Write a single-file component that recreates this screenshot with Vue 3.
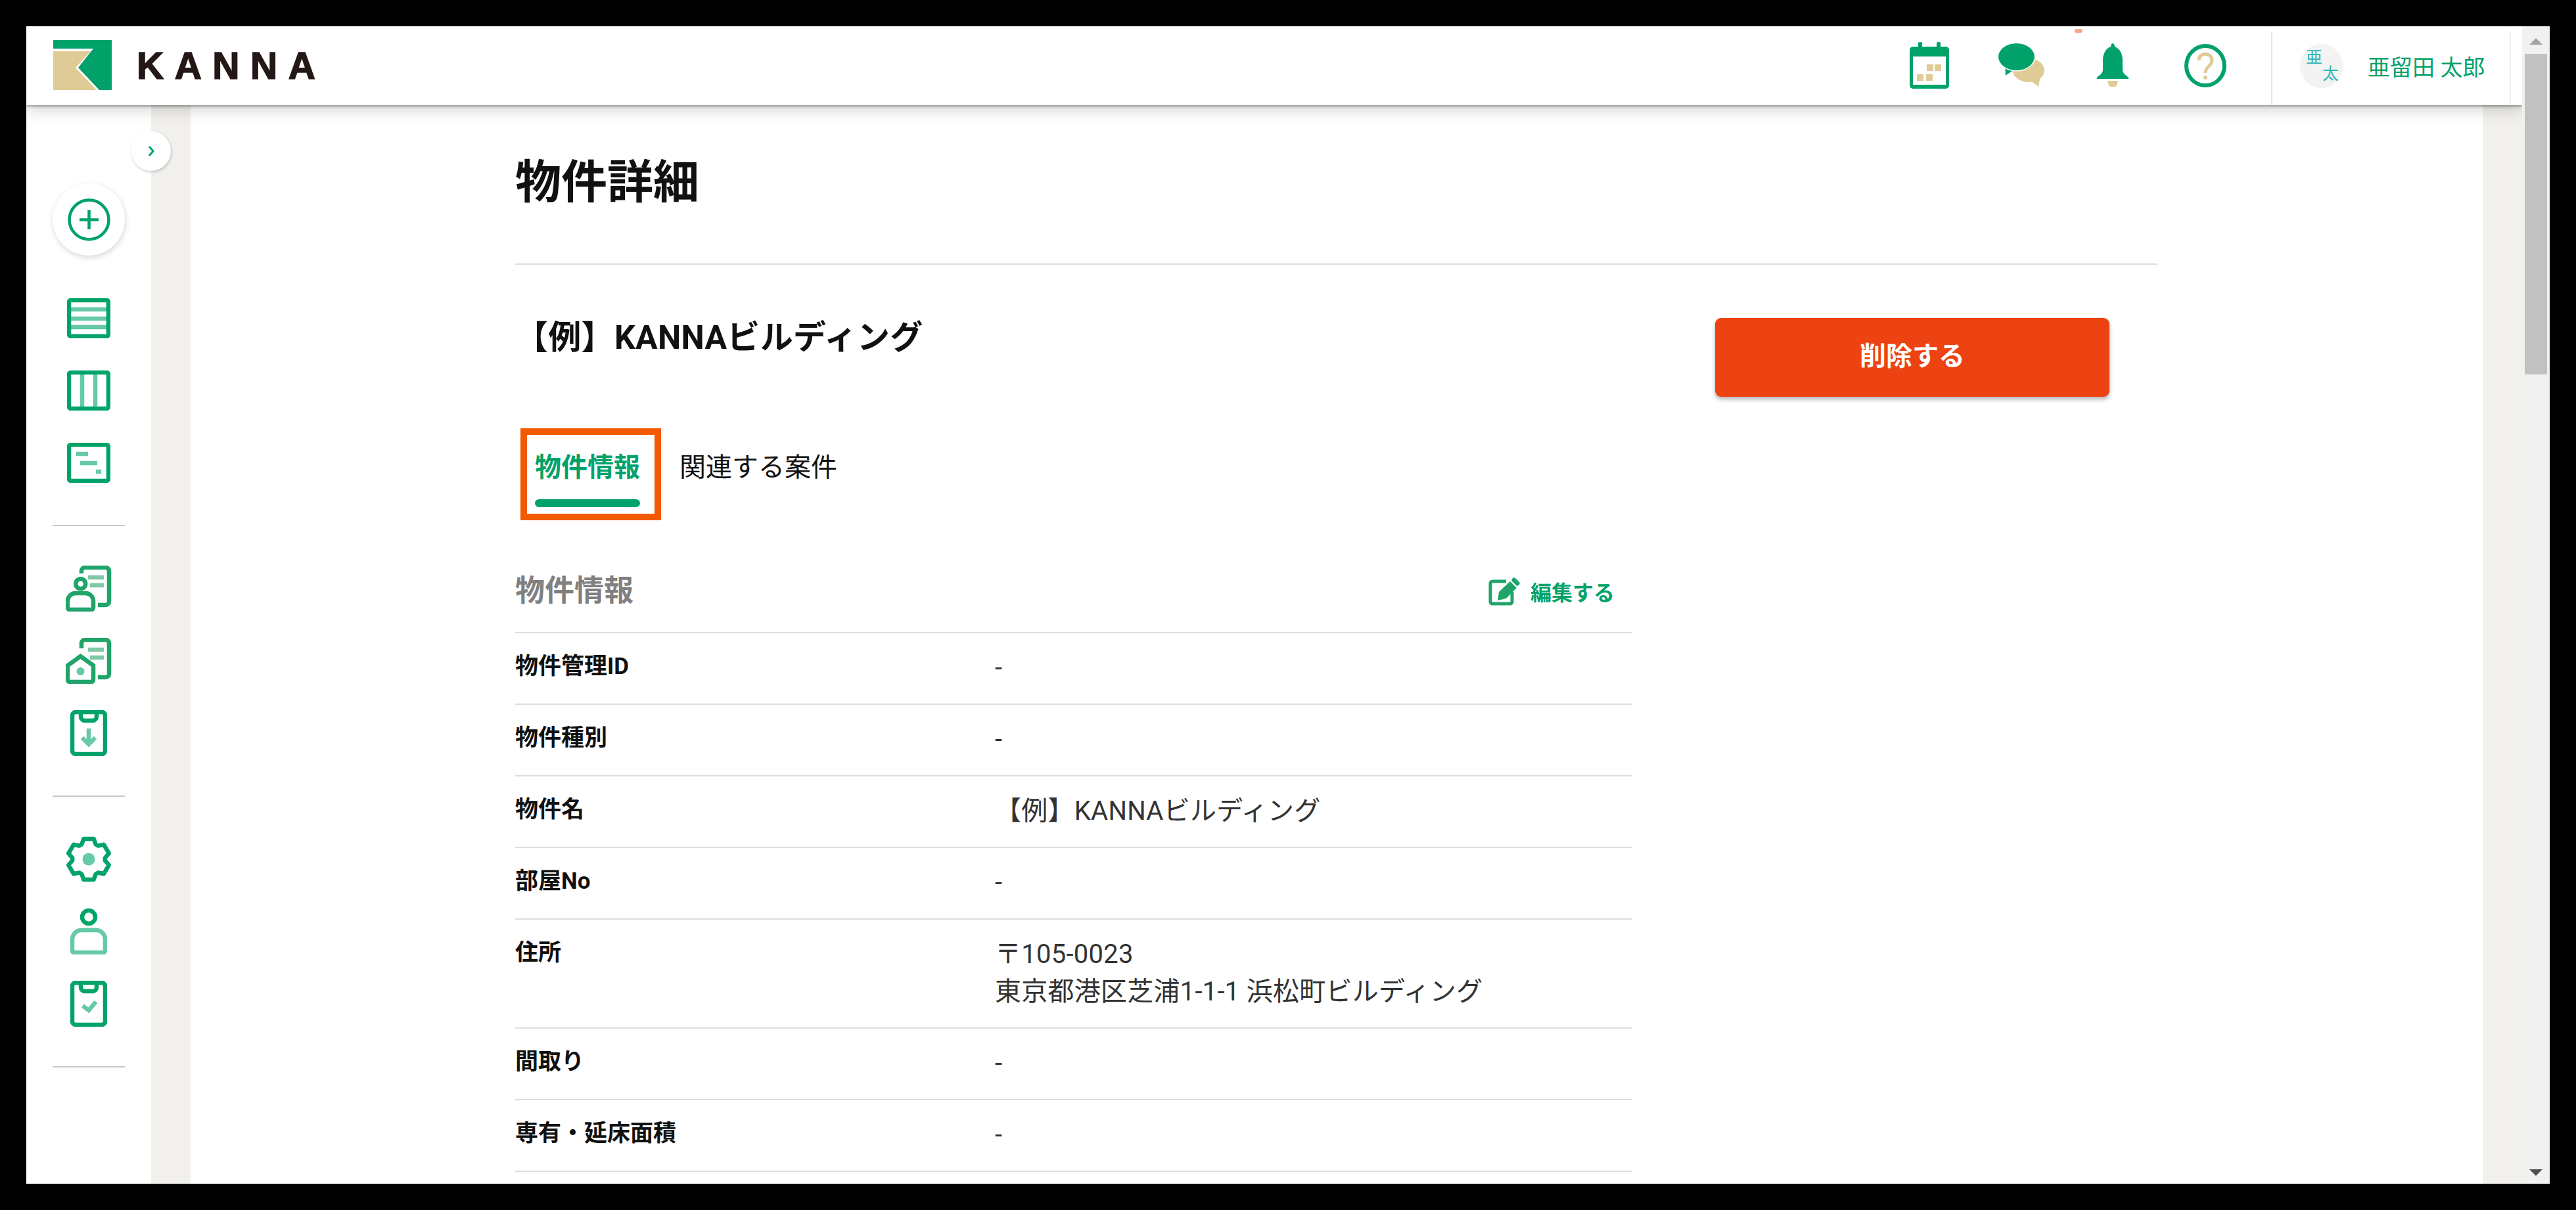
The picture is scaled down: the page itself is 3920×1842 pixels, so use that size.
<script setup>
const rows = [
  { label: "物件管理ID", value: "-" },
  { label: "物件種別", value: "-" },
  { label: "物件名", value: "【例】KANNAビルディング" },
  { label: "部屋No", value: "-" },
  { label: "住所", value: "〒105-0023\n東京都港区芝浦1-1-1 浜松町ビルディング" },
  { label: "間取り", value: "-" },
  { label: "専有・延床面積", value: "-" },
];

// 歯車アイコンの輪郭
function gearPath() {
  const pts = [];
  for (let i = 0; i < 6; i++) {
    const a = -90 + i * 60;
    [[a - 25, 25], [a - 14, 32], [a + 14, 32], [a + 25, 25]].forEach(([deg, r]) => {
      const rad = (deg * Math.PI) / 180;
      pts.push(`${(r * Math.cos(rad)).toFixed(1)} ${(r * Math.sin(rad)).toFixed(1)}`);
    });
  }
  return "M" + pts.join("L") + "Z";
}
const gear = gearPath();
</script>

<template>
  <div class="screen">
    <div class="app-col">
      <header class="topbar">
        <svg class="logo" width="89" height="76" viewBox="0 0 89 76">
          <polygon fill="#dfcb96" points="0,17 57,17 34,42 66,76 0,76" />
          <polygon fill="#00a26a" points="0,0 89,0 89,76 70,76 38,42 61,13 0,13" />
        </svg>
        <span class="logo-text">KANNA</span>

        <svg class="ic-cal" width="60" height="71" viewBox="0 0 60 71">
          <rect x="13" width="6" height="12" rx="2" fill="#00a26a" />
          <rect x="41" width="6" height="12" rx="2" fill="#00a26a" />
          <rect y="7" width="60" height="64" rx="5" fill="#00a26a" />
          <rect x="5" y="22" width="50" height="43" fill="#fff" />
          <rect x="26" y="34" width="10" height="10" fill="#dfcb96" />
          <rect x="38" y="34" width="10" height="10" fill="#dfcb96" />
          <rect x="11" y="49" width="10" height="10" fill="#dfcb96" />
          <rect x="25" y="49" width="10" height="10" fill="#dfcb96" />
        </svg>
        <svg class="ic-chat" width="70" height="66" viewBox="0 0 70 66">
          <ellipse cx="46" cy="41" rx="24" ry="18" fill="#dfcb96" />
          <polygon points="48,56 61,66 64,50" fill="#dfcb96" />
          <polygon points="10,32 24,40 11,49" fill="#00a26a" />
          <ellipse cx="27.5" cy="20.5" rx="27.5" ry="20.5" fill="#00a26a" stroke="#fff" stroke-width="3" paint-order="stroke" />
        </svg>
        <div class="bell-wrap">
          <svg width="50" height="66" viewBox="0 0 50 66">
            <path fill="#00a26a" d="M25 0c2 0 3 3 3 5 8 3 12 11 12 21v14c0 5 4 8 8 11 2 2 2 3 0 3H2c-2 0-2-1 0-3 4-3 8-6 8-11V26C10 16 14 8 22 5c0-2 1-5 3-5z" />
            <path fill="#dfcb96" d="M17 57h16l-2 7q-1 2-3 2h-6q-2 0-3-2z" />
          </svg>
          <span class="badge"></span>
        </div>
        <svg class="ic-help" width="64" height="66" viewBox="0 0 64 66">
          <ellipse cx="32" cy="33" rx="29" ry="30" fill="none" stroke="#00a26a" stroke-width="6" />
          <path d="M22 25c0-13 20-13 20 0 0 9-10 9-10 19" fill="none" stroke="#dfcb96" stroke-width="5" />
          <circle cx="32" cy="51" r="3" fill="#dfcb96" />
        </svg>

        <div class="user">
          <div class="avatar"><span class="av-a">亜</span><span class="av-b">太</span></div>
          <span class="user-name">亜留田 太郎</span>
        </div>
      </header>

      <div class="body">
        <aside class="sidebar">
          <button class="toggle" type="button">
            <svg width="10" height="16" viewBox="0 0 10 16"><path d="M2 1l6 7-6 7" fill="none" stroke="#00a26a" stroke-width="3" /></svg>
          </button>
          <div class="add-btn">
            <svg width="65" height="65" viewBox="0 0 65 65">
              <circle cx="32.5" cy="32.5" r="30" fill="none" stroke="#00a26a" stroke-width="4.5" />
              <path d="M18 32.5h29M32.5 18v29" stroke="#00a26a" stroke-width="4.5" />
            </svg>
          </div>

          <nav class="nav-group">
            <div class="nav-item">
              <svg width="66" height="61" viewBox="0 0 66 61">
                <path class="lt" d="M4 17h58M4 31h58M4 44h58" />
                <rect class="dk" x="3" y="3" width="60" height="55" rx="3" />
              </svg>
            </div>
            <div class="nav-item">
              <svg width="66" height="61" viewBox="0 0 66 61">
                <path class="lt" d="M23 4v53M43 4v53" />
                <rect class="dk" x="3" y="3" width="60" height="55" rx="3" />
              </svg>
            </div>
            <div class="nav-item">
              <svg width="66" height="61" viewBox="0 0 66 61">
                <path class="lt" d="M14 17h18M20 31h26M44 44h8" />
                <rect class="dk" x="3" y="3" width="60" height="55" rx="3" />
              </svg>
            </div>
          </nav>
          <div class="nav-line"></div>

          <nav class="nav-group">
            <div class="nav-item">
              <svg width="70" height="70" viewBox="0 0 70 70">
                <path class="dk2" d="M24 12V8a5 5 0 0 1 5-5h32a5 5 0 0 1 5 5v47a5 5 0 0 1-5 5H49" />
                <path class="lt2" d="M34 18h24M37 30h21" />
                <circle class="dk2" cx="22.7" cy="27.7" r="7.5" />
                <path class="dk2" d="M15 42h15a12 12 0 0 1 12 12v10a3 3 0 0 1-3 3H6a3 3 0 0 1-3-3V54a12 12 0 0 1 12-12z" />
              </svg>
            </div>
            <div class="nav-item">
              <svg width="70" height="70" viewBox="0 0 70 70">
                <path class="dk2" d="M24 16V8a5 5 0 0 1 5-5h32a5 5 0 0 1 5 5v47a5 5 0 0 1-5 5H49" />
                <path class="lt2" d="M34 18h24M37 30h21" />
                <path class="dk2" d="M3 64V42L22.5 28 42 42v22a3 3 0 0 1-3 3H6a3 3 0 0 1-3-3z" />
                <circle cx="22.5" cy="51" r="6" fill="#66c9a8" />
              </svg>
            </div>
            <div class="nav-item">
              <svg width="56" height="70" viewBox="0 0 56 70">
                <rect class="dk" x="3" y="3" width="50" height="64" rx="5" />
                <path class="dk" d="M16 3v7a6 6 0 0 0 6 6h12a6 6 0 0 0 6-6V3" />
                <path class="lt" d="M28 28v23M18 42l10 10 10-10" />
              </svg>
            </div>
          </nav>
          <div class="nav-line"></div>

          <nav class="nav-group">
            <div class="nav-item">
              <svg width="70" height="70" viewBox="-35 -35 70 70">
                <path class="dk" :d="gear" stroke-linejoin="round" />
                <circle r="9.5" fill="#66c9a8" />
              </svg>
            </div>
            <div class="nav-item">
              <svg width="56" height="70" viewBox="0 0 56 70">
                <circle class="dk" cx="28" cy="13" r="10" />
                <path class="lt" d="M17 33h22a14 14 0 0 1 14 14v17a3 3 0 0 1-3 3H6a3 3 0 0 1-3-3V47a14 14 0 0 1 14-14z" />
              </svg>
            </div>
            <div class="nav-item">
              <svg width="56" height="70" viewBox="0 0 56 70">
                <rect class="dk" x="3" y="3" width="50" height="64" rx="5" />
                <path class="dk" d="M16 3v7a6 6 0 0 0 6 6h12a6 6 0 0 0 6-6V3" />
                <path class="lt" d="M19 38l9 7 11-13" />
              </svg>
            </div>
          </nav>
          <div class="nav-line"></div>
        </aside>

        <div class="gutter"></div>

        <main class="main">
          <h1 class="page-title">物件詳細</h1>

          <div class="name-row">
            <h2 class="name">【例】KANNAビルディング</h2>
            <button class="delete-btn" type="button">削除する</button>
          </div>

          <div class="tabs">
            <div class="tab tab--active">
              <span>物件情報</span>
              <i class="tab__bar"></i>
            </div>
            <div class="tab">関連する案件</div>
          </div>

          <section class="info">
            <div class="info__head">
              <h3 class="info__title">物件情報</h3>
              <a class="edit">
                <svg width="50" height="45" viewBox="0 0 50 45">
                  <path d="M27 7H6a3 3 0 0 0-3 3v28a3 3 0 0 0 3 3h27a3 3 0 0 0 3-3V23" fill="none" stroke="#20a46a" stroke-width="5" />
                  <polygon points="14,36 16,23 33,7 43,17 27,33" fill="#20a46a" />
                  <path d="M39 5l5 5" stroke="#20a46a" stroke-width="7" stroke-linecap="round" />
                </svg>
                <span class="edit__text">編集する</span>
              </a>
            </div>
            <div class="row" v-for="row in rows" :key="row.label">
              <div class="row__label">{{ row.label }}</div>
              <div class="row__value">{{ row.value }}</div>
            </div>
          </section>
        </main>

        <div class="gutter"></div>
      </div>
    </div>

    <div class="scrollbar">
      <i class="arrow arrow--up"></i>
      <div class="thumb"></div>
      <i class="arrow arrow--down"></i>
    </div>
  </div>
</template>

<style scoped>
.screen {
  width: 3840px;
  height: 1762px;
  margin: 40px;
  display: flex;
  overflow: hidden;
  background: #fff;
  font-family: Roboto, "Noto Sans CJK JP", sans-serif;
  color: #111;
}

.app-col {
  width: 3798px;
  display: flex;
  flex-direction: column;
}

.topbar {
  position: relative;
  z-index: 2;
  flex: none;
  height: 120px;
  display: flex;
  align-items: center;
  padding: 0 17px 0 41px;
  background: #fff;
  box-shadow: 0 2px 4px rgba(0, 0, 0, 0.35), 0 8px 22px rgba(0, 0, 0, 0.16);
}

.logo {
  flex: none;
  margin-top: -2px;
}

.logo-text {
  margin-left: 38px;
  margin-right: auto;
  font-family: "Liberation Sans", sans-serif;
  font-size: 57px;
  font-weight: 700;
  letter-spacing: 16.5px;
  color: #231815;
  -webkit-text-stroke: 1.5px #231815;
}

.ic-cal {
  margin-top: -1px;
}

.ic-chat {
  margin-left: 75px;
  margin-top: -2px;
}

.bell-wrap {
  position: relative;
  display: flex;
  margin-left: 79px;
  margin-top: -2px;
}

.badge {
  position: absolute;
  left: -33px;
  top: -22px;
  width: 12px;
  height: 6px;
  border-radius: 3px;
  background: #f6a58c;
}

.ic-help {
  margin-left: 84px;
}

.user {
  box-sizing: border-box;
  align-self: stretch;
  margin-top: 8px;
  margin-left: 68px;
  width: 365px;
  display: flex;
  align-items: center;
  padding: 0 0 8px 42px;
  border-left: 2px solid #e4e4e4;
  border-right: 2px solid #eee;
}

.avatar {
  flex: none;
  width: 65px;
  height: 67px;
  border-radius: 50%;
  background: #f3f3f3;
  display: grid;
  grid-template: 33px 34px / 34px 31px;
  font-size: 25px;
  line-height: 25px;
  color: #2db5b5;
}

.av-a {
  grid-area: 1 / 1;
  align-self: end;
  justify-self: end;
}

.av-b {
  grid-area: 2 / 2;
}

.user-name {
  margin-left: 38px;
  font-size: 34px;
  color: #00a26a;
  white-space: nowrap;
}

.body {
  flex: 1;
  min-height: 0;
  display: flex;
}

.sidebar {
  position: relative;
  flex: none;
  width: 190px;
  padding-top: 119px;
  display: flex;
  flex-direction: column;
  align-items: center;
  background: #fff;
}

.toggle {
  position: absolute;
  top: 40px;
  right: -30px;
  z-index: 1;
  width: 60px;
  height: 60px;
  padding: 0;
  border: none;
  border-radius: 50%;
  background: #fff;
  box-shadow: 1px 2px 4px rgba(0, 0, 0, 0.2);
  display: flex;
  align-items: center;
  justify-content: center;
}

.add-btn {
  flex: none;
  width: 110px;
  height: 110px;
  border-radius: 50%;
  background: #fff;
  box-shadow: 1px 3px 8px rgba(0, 0, 0, 0.16);
  display: flex;
  align-items: center;
  justify-content: center;
  margin-bottom: 40px;
}

.nav-group {
  display: flex;
  flex-direction: column;
}

.nav-item {
  height: 110px;
  display: flex;
  align-items: center;
  justify-content: center;
}

.nav-line {
  flex: none;
  width: 110px;
  height: 2px;
  margin: 40px 0;
  background: #c8c8c8;
}

.dk,
.lt,
.dk2,
.lt2 {
  fill: none;
  stroke-width: 6.5;
}

.dk {
  stroke: #00a469;
}

.lt {
  stroke: #66c9a8;
}

.dk2 {
  stroke: #20a46a;
}

.lt2 {
  stroke: #7fc9a6;
}

.gutter {
  flex: none;
  width: 60px;
  background: #f1f0ec;
}

.main {
  flex: 1;
  min-width: 0;
  padding-left: 494px;
  background: #fff;
}

.page-title {
  width: 2499px;
  margin: 0;
  padding: 68px 0 73px;
  border-bottom: 2px solid #ddd;
  font-size: 70px;
  line-height: 100px;
  font-weight: 700;
}

.name-row {
  width: 2426px;
  padding-top: 81px;
  display: flex;
  justify-content: space-between;
  align-items: flex-start;
}

.name {
  margin: 0;
  font-size: 50px;
  line-height: 60px;
  font-weight: 700;
  letter-spacing: 0.3px;
}

.delete-btn {
  width: 600px;
  height: 120px;
  padding: 0 0 10px;
  border: none;
  border-radius: 9px;
  background: #ed4212;
  box-shadow: 0 4px 6px rgba(0, 0, 0, 0.3);
  color: #fff;
  font-family: inherit;
  font-size: 40px;
  font-weight: 700;
}

.tabs {
  display: flex;
  margin: 48px 0 0 8px;
  font-size: 40px;
  line-height: 56px;
}

.tab {
  padding-top: 32px;
}

.tab--active {
  width: 214px;
  height: 140px;
  box-sizing: border-box;
  margin-right: 28px;
  padding: 22px 22px 0 12px;
  border: 10px solid #f15a00;
  color: #00a26a;
  font-weight: 700;
}

.tab__bar {
  display: block;
  height: 12px;
  margin-top: 20px;
  border-radius: 6px;
  background: #00a26a;
}

.info {
  width: 1700px;
  margin-top: 76px;
}

.info__head {
  display: flex;
  justify-content: space-between;
  align-items: center;
  padding: 2px 27px 32px 0;
}

.info__title {
  margin: 0;
  font-size: 45px;
  line-height: 60px;
  font-weight: 700;
  color: #808080;
}

.edit {
  display: flex;
  align-items: center;
  gap: 14px;
  font-size: 32px;
  font-weight: 700;
  color: #00a26a;
}

.row {
  display: flex;
  padding: 22px 0 26px;
  border-top: 2px solid #ddd;
}

.row:last-child {
  border-bottom: 2px solid #ddd;
}

.row__label {
  flex: none;
  width: 730px;
  margin-top: 4px;
  font-size: 35px;
  line-height: 50px;
  font-weight: 700;
}

.row__value {
  margin-top: 2px;
  font-size: 40px;
  line-height: 57px;
  letter-spacing: 0.25px;
  white-space: pre-line;
  color: #333;
}

.scrollbar {
  position: relative;
  z-index: 3;
  flex: none;
  width: 42px;
  display: flex;
  flex-direction: column;
  align-items: center;
  background: #f1f1f1;
}

.arrow {
  width: 0;
  height: 0;
  border-left: 10px solid transparent;
  border-right: 10px solid transparent;
}

.arrow--up {
  margin-top: 18px;
  border-bottom: 10px solid #a3a3a3;
}

.arrow--down {
  margin-top: auto;
  margin-bottom: 12px;
  border-top: 10px solid #505050;
}

.thumb {
  width: 34px;
  height: 488px;
  margin-top: 14px;
  background: #c1c1c1;
}
</style>

<style>
html,
body {
  margin: 0;
  background: #000;
  overflow: hidden;
}
</style>
